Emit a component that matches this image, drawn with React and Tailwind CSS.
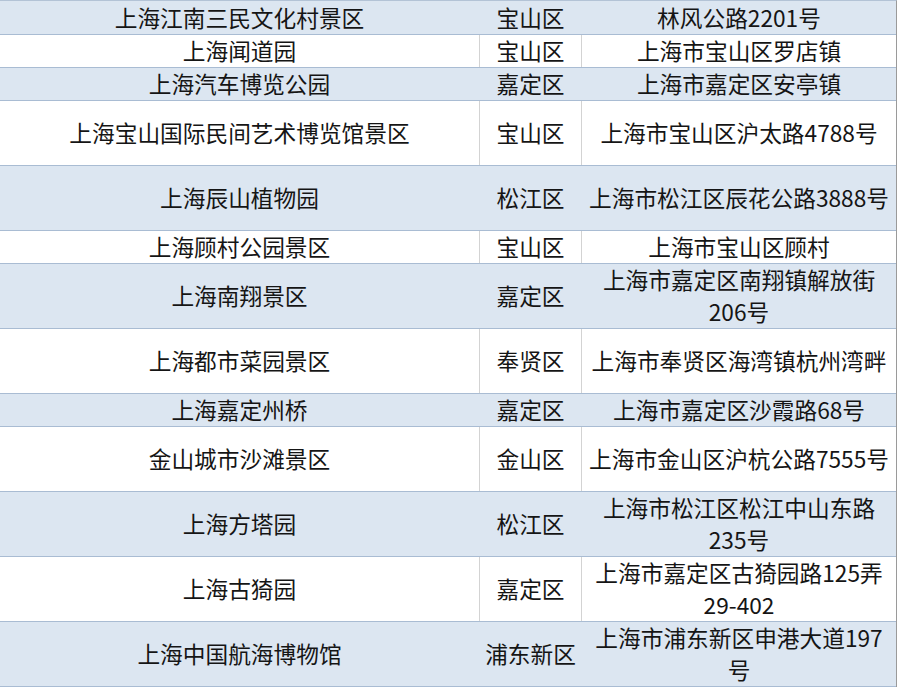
import React from 'react';

const ROWS = [
    { name: '上海江南三民文化村景区', district: '宝山区', addr: ['林风公路2201号'], h: 'h-[34px]' },
    { name: '上海闻道园', district: '宝山区', addr: ['上海市宝山区罗店镇'], h: 'h-[33px]' },
    { name: '上海汽车博览公园', district: '嘉定区', addr: ['上海市嘉定区安亭镇'], h: 'h-[33px]' },
    { name: '上海宝山国际民间艺术博览馆景区', district: '宝山区', addr: ['上海市宝山区沪太路4788号'], h: 'h-[65px]' },
    { name: '上海辰山植物园', district: '松江区', addr: ['上海市松江区辰花公路3888号'], h: 'h-[65px]' },
    { name: '上海顾村公园景区', district: '宝山区', addr: ['上海市宝山区顾村'], h: 'h-[33px]' },
    { name: '上海南翔景区', district: '嘉定区', addr: ['上海市嘉定区南翔镇解放街', '206号'], h: 'h-[65px]' },
    { name: '上海都市菜园景区', district: '奉贤区', addr: ['上海市奉贤区海湾镇杭州湾畔'], h: 'h-[65px]' },
    { name: '上海嘉定州桥', district: '嘉定区', addr: ['上海市嘉定区沙霞路68号'], h: 'h-[33px]' },
    { name: '金山城市沙滩景区', district: '金山区', addr: ['上海市金山区沪杭公路7555号'], h: 'h-[65px]' },
    { name: '上海方塔园', district: '松江区', addr: ['上海市松江区松江中山东路', '235号'], h: 'h-[65px]' },
    { name: '上海古猗园', district: '嘉定区', addr: ['上海市嘉定区古猗园路125弄', '29-402'], h: 'h-[65px]' },
    { name: '上海中国航海博物馆', district: '浦东新区', addr: ['上海市浦东新区申港大道197', '号'], h: 'h-[65px]' },
];

export default function App() {
    return (
        <div
            className="w-[898px] h-[687px] bg-white overflow-hidden text-[#151515] text-[22.7px] leading-[32px]"
            style={{ fontFamily: '"Noto Sans CJK SC", "Noto Sans", sans-serif' }}
        >
            <div className="w-[897px] border-t border-r border-t-[#b3c3d6] border-r-[#9a9a9a]">
                {ROWS.map((row, i) => {
                    const blue = i % 2 === 0;
                    const divider = blue ? 'border-r-transparent' : 'border-r-[#d3d3d3]';
                    return (
                        <div
                            key={row.name}
                            className={`flex ${row.h} border-b border-b-[#a9bcd3] ${blue ? 'bg-[#dce6f1]' : 'bg-white'}`}
                        >
                            <div className={`w-[480px] flex items-center justify-center border-r ${divider} whitespace-nowrap`}>
                                {row.name}
                            </div>
                            <div className={`w-[102px] flex items-center justify-center border-r ${divider} whitespace-nowrap`}>
                                {row.district}
                            </div>
                            <div className="flex-1 flex flex-col items-center justify-center whitespace-nowrap">
                                {row.addr.map((line) => (
                                    <span key={line}>{line}</span>
                                ))}
                            </div>
                        </div>
                    );
                })}
            </div>
        </div>
    );
}
